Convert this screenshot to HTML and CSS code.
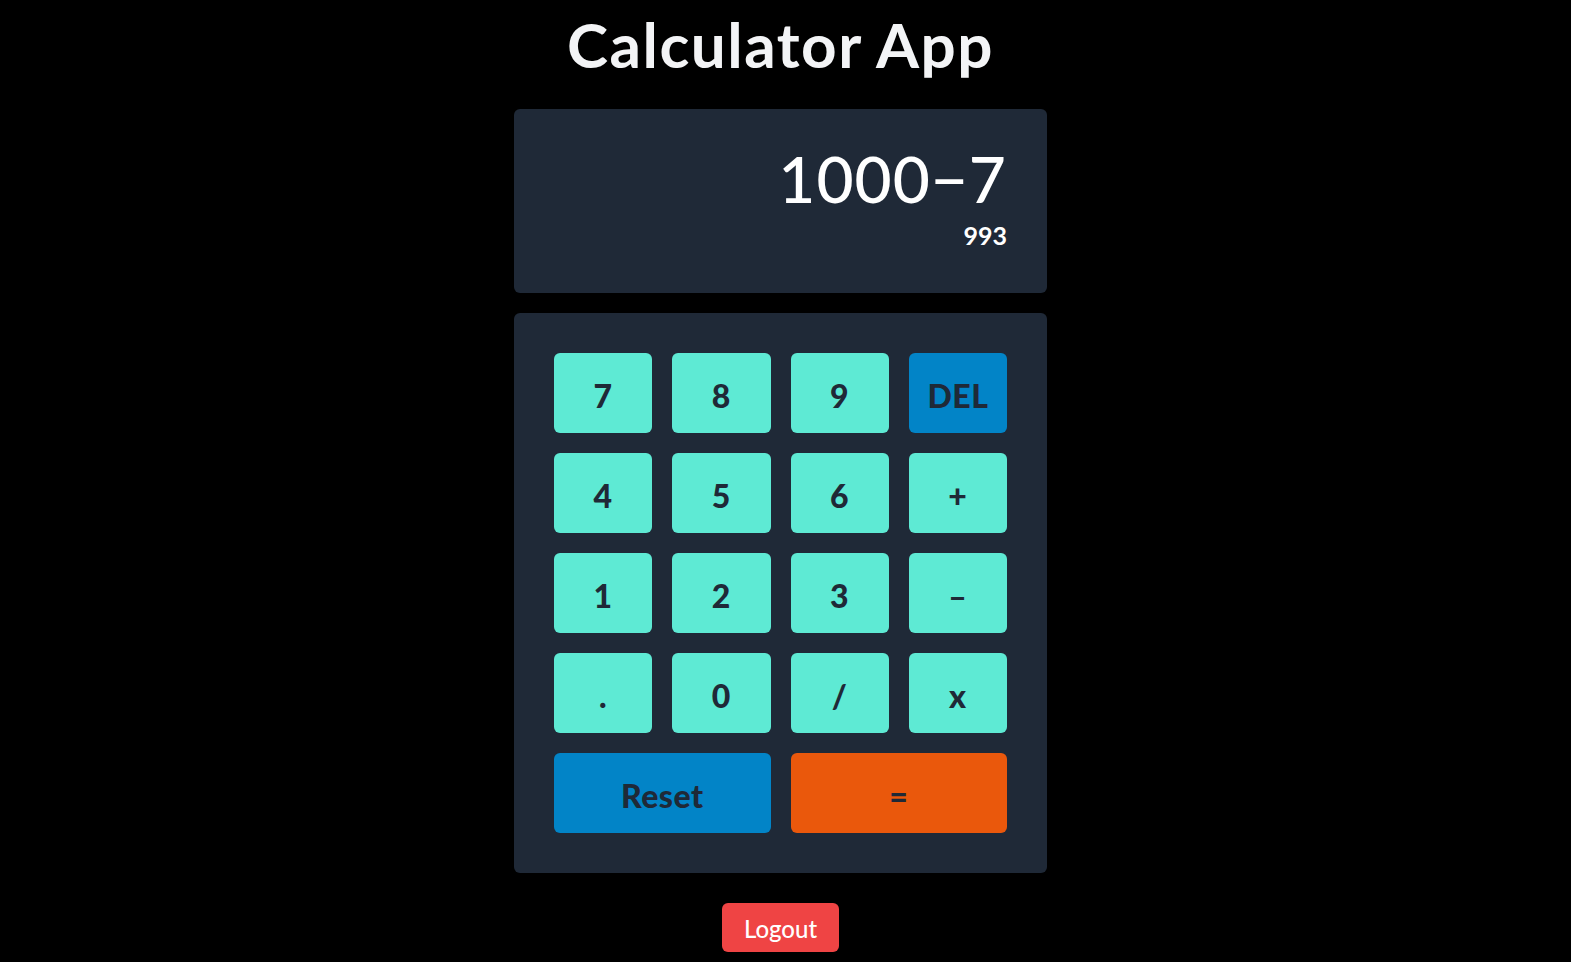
FILE: index.html
```html
<!DOCTYPE html>
<html>
<head>
<meta charset="utf-8">
<link rel="stylesheet" href="styles.css">
</head>
<body>
<main class="app">
  <h1 class="title">Calculator App</h1>
  <section class="display">
    <div class="expr">1000−7</div>
    <div class="result">993</div>
  </section>
  <section class="keypad">
    <button class="key">7</button>
    <button class="key">8</button>
    <button class="key">9</button>
    <button class="key key-blue">DEL</button>
    <button class="key">4</button>
    <button class="key">5</button>
    <button class="key">6</button>
    <button class="key">+</button>
    <button class="key">1</button>
    <button class="key">2</button>
    <button class="key">3</button>
    <button class="key">–</button>
    <button class="key">.</button>
    <button class="key">0</button>
    <button class="key">/</button>
    <button class="key">x</button>
    <button class="key key-blue key-wide">Reset</button>
    <button class="key key-orange key-wide">=</button>
  </section>
  <button class="logout">Logout</button>
</main>
</body>
</html>
```
FILE: styles.css
```css
html, body {
  margin: 0;
  padding: 0;
  background: #000;
}
body {
  font-family: "Lato", "Open Sans", sans-serif;
  color: #f3f4f6;
}
.app {
  display: flex;
  flex-direction: column;
  align-items: center;
  margin-right: 10px;
}
.title {
  margin: 14px 0 35px;
  font-size: 62px;
  line-height: 60px;
  font-weight: 700;
  color: #f3f4f6;
  letter-spacing: 1.5px;
}
.display {
  width: 533px;
  height: 184px;
  box-sizing: border-box;
  background: #1f2937;
  border-radius: 6px;
  padding: 38px 40px 0;
  display: flex;
  flex-direction: column;
  align-items: flex-end;
  color: #fff;
}
.expr {
  font-size: 64px;
  line-height: 64px;
  font-weight: 500;
  letter-spacing: 1px;
}
.result {
  margin-top: 10px;
  font-size: 25px;
  line-height: 28px;
  font-weight: 700;
}
.keypad {
  margin-top: 20px;
  width: 533px;
  box-sizing: border-box;
  background: #1f2937;
  border-radius: 6px;
  padding: 40px;
  display: grid;
  grid-template-columns: repeat(4, 98.25px);
  grid-auto-rows: 80px;
  gap: 20px;
}
.key {
  border: none;
  border-radius: 6px;
  background: #5eead4;
  color: #1f2937;
  font-family: inherit;
  font-size: 32px;
  font-weight: 900;
  letter-spacing: 0.5px;
  padding: 0;
  padding-top: 4px;
}
.key-blue {
  background: #0284c7;
}
.key-orange {
  background: #ea580c;
}
.key-wide {
  grid-column: span 2;
}
.logout {
  margin-top: 30px;
  width: 117px;
  height: 49px;
  border: none;
  border-radius: 6px;
  background: #ef4444;
  color: #fff;
  font-family: inherit;
  font-size: 24px;
  font-weight: 500;
  padding: 2px 0 0;
}
```
